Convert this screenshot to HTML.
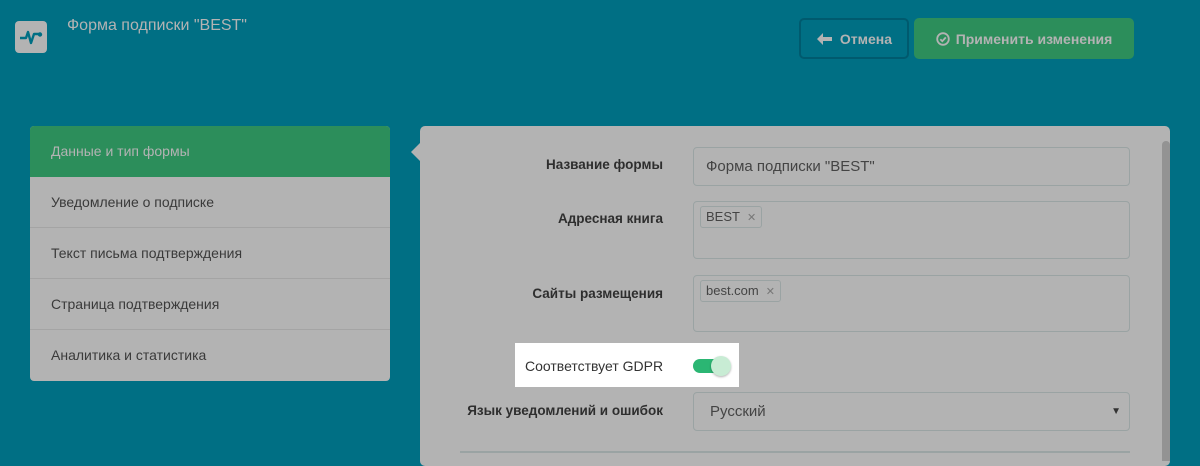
<!DOCTYPE html>
<html><head><meta charset="utf-8"><style>
*{box-sizing:border-box;margin:0;padding:0}
body{width:1200px;height:455px;overflow:hidden;background:#006f84;font-family:"Liberation Sans",sans-serif;position:relative}
.a{position:absolute}
.logo{left:15px;top:21px;width:32px;height:32px;background:#b3b3b3;border-radius:4px}
.title{left:67px;top:17px;color:#b3b3b3;font-size:16px}
.btn{top:18px;height:41px;border-radius:5px;font-weight:bold;font-size:14px;color:#b3b3b3;display:flex;align-items:center;justify-content:center;gap:6px}
.side{left:30px;top:126px;width:360px;height:255px;background:#b3b3b3;border-radius:4px;overflow:hidden}
.side div{height:51px;line-height:51px;padding-left:21px;font-size:14px;color:#3a3a3a;border-bottom:1px solid #a4a4a4}
.side div.act{background:#2c8e5b;color:#b3b3b3;border:none}
.panel{left:420px;top:126px;width:750px;height:340px;background:#b3b3b3;border-radius:5px}
.lbl{width:300px;text-align:right;font-size:13.5px;font-weight:bold;color:#2e2e2e}
.inp{left:693px;width:437px;border:1px solid #9aa3a3;border-radius:4px}
.tag{position:absolute;left:6px;top:4px;height:22px;border:1px solid #9aa3a3;border-radius:3px;font-size:13px;color:#444;padding:2px 5px;background:#b3b3b3}
.tag span{color:#777;margin-left:7px;font-size:11px}
</style></head><body>
<div class="a logo"><svg width="32" height="32" viewBox="0 0 32 32"><path d="M5 17h6l2-6 3 11 3-9h5" fill="none" stroke="#006f84" stroke-width="2.4" stroke-linejoin="round"/><circle cx="25" cy="13.5" r="2.2" fill="#006f84"/></svg></div>
<div class="a title">Форма подписки "BEST"</div>
<div class="a btn" style="left:799px;width:110px;border:2px solid #005a6e"><svg width="18" height="14" viewBox="0 0 18 14"><path d="M7 1L1 7l6 6V9h9V5H7z" fill="#b3b3b3"/></svg>Отмена</div>
<div class="a btn" style="left:914px;width:220px;background:#2c8e5b"><svg width="14" height="14" viewBox="0 0 14 14"><circle cx="7" cy="7" r="5.8" fill="none" stroke="#b3b3b3" stroke-width="1.8"/><path d="M4.3 7.2l2 2 3.5-3.8" fill="none" stroke="#b3b3b3" stroke-width="1.8"/></svg>Применить изменения</div>
<div class="a side"><div class="act">Данные и тип формы</div><div>Уведомление о подписке</div><div>Текст письма подтверждения</div><div>Страница подтверждения</div><div style="border:none">Аналитика и статистика</div></div>
<div class="a" style="left:411px;top:143px;width:0;height:0;border-top:9px solid transparent;border-bottom:9px solid transparent;border-right:9px solid #b3b3b3"></div>
<div class="a panel"></div>
<div class="a" style="left:1162px;top:141px;width:8px;height:320px;background:#939393;border-radius:4px 4px 0 0"></div>
<div class="a lbl" style="left:363px;top:157px">Название формы</div>
<div class="a inp" style="top:147px;height:39px;padding:10px 12px;font-size:15px;color:#444">Форма подписки "BEST"</div>
<div class="a lbl" style="left:363px;top:211px">Адресная книга</div>
<div class="a inp" style="top:201px;height:58px"><div class="tag">BEST<span>✕</span></div></div>
<div class="a lbl" style="left:363px;top:286px">Сайты размещения</div>
<div class="a inp" style="top:275px;height:57px"><div class="tag">best.com<span>✕</span></div></div>
<div class="a" style="left:515px;top:343px;width:224px;height:44px;background:#fff"></div>
<div class="a" style="left:525px;top:358px;font-size:14px;color:#333">Соответствует GDPR</div>
<div class="a" style="left:693px;top:359px;width:34px;height:14px;background:#2bb673;border-radius:7px"></div>
<div class="a" style="left:711px;top:356px;width:20px;height:20px;background:#c8ecd4;border-radius:50%;box-shadow:0 1px 2px rgba(0,0,0,.3)"></div>
<div class="a lbl" style="left:363px;top:403px">Язык уведомлений и ошибок</div>
<div class="a inp" style="top:392px;height:39px;padding:10px 16px;font-size:15px;color:#444">Русский<span style="position:absolute;right:8px;top:13px;font-size:10px;color:#333">▼</span></div>
<div class="a" style="left:460px;top:451px;width:670px;height:2px;background:#9aa3a3"></div>
</body></html>
